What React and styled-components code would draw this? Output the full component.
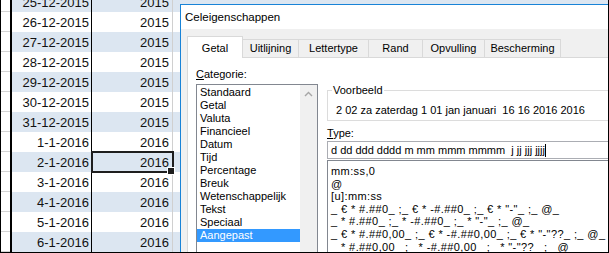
import styled, { createGlobalStyle } from "styled-components";

const GlobalStyle = createGlobalStyle`
  html, body { margin: 0; padding: 0; background: #fff; }
  body { font-family: "Liberation Sans", Arial, sans-serif; }
  * { box-sizing: border-box; }
`;

const rows = [
  ["25-12-2015", "2015"],
  ["26-12-2015", "2015"],
  ["27-12-2015", "2015"],
  ["28-12-2015", "2015"],
  ["29-12-2015", "2015"],
  ["30-12-2015", "2015"],
  ["31-12-2015", "2015"],
  ["1-1-2016", "2016"],
  ["2-1-2016", "2016"],
  ["3-1-2016", "2016"],
  ["4-1-2016", "2016"],
  ["5-1-2016", "2016"],
  ["6-1-2016", "2016"],
];

const tabs = [
  { label: "Getal", w: 56 },
  { label: "Uitlijning", w: 57 },
  { label: "Lettertype", w: 71 },
  { label: "Rand", w: 55 },
  { label: "Opvulling", w: 63 },
  { label: "Bescherming", w: 77 },
];

const categories = [
  "Standaard",
  "Getal",
  "Valuta",
  "Financieel",
  "Datum",
  "Tijd",
  "Percentage",
  "Breuk",
  "Wetenschappelijk",
  "Tekst",
  "Speciaal",
  "Aangepast",
];

const formats = [
  "mm:ss,0",
  "@",
  "[u]:mm:ss",
  '_ € * #.##0_ ;_ € * -#.##0_ ;_ € * "-"_ ;_ @_',
  '_ * #.##0_ ;_ * -#.##0_ ;_ * "-"_ ;_ @_',
  '_ € * #.##0,00_ ;_ € * -#.##0,00_ ;_ € * "-"??_ ;_ @_',
  '_ * #.##0,00_ ;_ * -#.##0,00_ ;_ * "-"??_ ;_ @_',
];

export default function App() {
  return (
    <>
      <GlobalStyle />
      <Frame>
        <Sheet>
          {rows.map(([date, year], i) => (
            <Row key={date} $band={i % 2 === 0}>
              <Stub />
              <DateCell>{date}</DateCell>
              <YearCell $selected={date === "2-1-2016"}>{year}</YearCell>
              <Filler />
            </Row>
          ))}
        </Sheet>

        <Dialog>
          <TitleBar>Celeigenschappen</TitleBar>
          <Body>
            <TabStrip>
              {tabs.map((t, i) => (
                <Tab key={t.label} $w={t.w} $active={i === 0}>
                  {t.label}
                </Tab>
              ))}
            </TabStrip>
            <TabPage>
              <LeftCol>
                <Label>
                  <u>C</u>ategorie:
                </Label>
                <ListBox>
                  <Items>
                    {categories.map((c) => (
                      <Item key={c} $selected={c === "Aangepast"}>
                        {c}
                      </Item>
                    ))}
                  </Items>
                  <ScrollBar>
                    <ScrollButton>
                      <svg width="9" height="6" viewBox="0 0 9 6">
                        <path d="M1 5 L4.5 1.5 L8 5" fill="none" stroke="#a6a6a6" strokeWidth="1.4" />
                      </svg>
                    </ScrollButton>
                  </ScrollBar>
                </ListBox>
              </LeftCol>

              <RightCol>
                <Group>
                  <Legend>Voorbeeld</Legend>
                  <Sample>2 02 za zaterdag 1 01 jan januari  16 16 2016 2016</Sample>
                </Group>
                <TypeLabel>
                  <u>T</u>ype:
                </TypeLabel>
                <TypeInput>
                  d dd ddd dddd m mm mmm mmmm  j jj jjj jjjj
                  <Caret />
                </TypeInput>
                <FormatList>
                  {formats.map((f) => (
                    <FormatItem key={f}>{f}</FormatItem>
                  ))}
                </FormatList>
              </RightCol>
            </TabPage>
          </Body>
        </Dialog>
      </Frame>
    </>
  );
}

const Frame = styled.div`
  position: relative;
  width: 609px;
  height: 253px;
  overflow: hidden;
  border-left: 1px solid #000;
  border-right: 1px solid #000;
  border-bottom: 1px solid #000;
  background: #fff;
`;

const Sheet = styled.div`
  margin-top: -8px;
  display: flex;
  flex-direction: column;
`;

const Row = styled.div`
  display: grid;
  grid-template-columns: 9px 82px 81px 1fr;
  height: 20px;
  background: ${(p) => (p.$band ? "#dce6f1" : "#ffffff")};
  font-size: 13px;
  color: #111;
`;

const Stub = styled.div`
  background: #fff;
  border-bottom: 1px solid #d4d4d4;
`;

const DateCell = styled.div`
  border-left: 2px solid #000;
  border-right: 1px solid #000;
  text-align: right;
  padding: 2px 2px 0 0;
  line-height: 18px;
`;

const YearCell = styled.div`
  position: relative;
  border-right: 1px solid #d0d0d0;
  text-align: right;
  padding: 2px 3px 0 0;
  line-height: 18px;
  ${(p) =>
    p.$selected &&
    `
    z-index: 1;
    outline: 2px solid #1e1e1e;
    outline-offset: -1px;
    &::after {
      content: "";
      position: absolute;
      right: -3px;
      bottom: -3px;
      width: 6px;
      height: 6px;
      background: #1e1e1e;
      border: 1px solid #fff;
    }
  `}
`;

const Filler = styled.div``;

const Dialog = styled.div`
  position: absolute;
  left: 179px;
  top: 4px;
  width: 440px;
  height: 280px;
  border: 1px solid #1883d7;
  background: #f0f0f0;
  font-family: "Liberation Sans", Arial, sans-serif;
  font-size: 11px;
  color: #000;
  z-index: 2;
`;

const TitleBar = styled.div`
  height: 24px;
  line-height: 24px;
  padding-left: 4px;
  background: #fff;
  font-size: 11.5px;
`;

const Body = styled.div`
  padding: 7px 0 0 6px;
`;

const TabStrip = styled.div`
  display: flex;
  align-items: flex-end;
  height: 21px;
`;

const Tab = styled.div`
  width: ${(p) => p.$w}px;
  margin-left: -1px;
  &:first-child {
    margin-left: 0;
  }
  text-align: center;
  border: 1px solid #d9d9d9;
  white-space: nowrap;
  ${(p) =>
    p.$active
      ? `
    position: relative;
    z-index: 1;
    height: 22px;
    margin-bottom: -1px;
    border-bottom: none;
    background: #fff;
    padding-top: 4px;
    line-height: 14px;
  `
      : `
    height: 18px;
    border-bottom: none;
    background: #f0f0f0;
    line-height: 17px;
  `}
`;

const TabPage = styled.div`
  display: flex;
  height: 220px;
  background: #fff;
  border: 1px solid #d9d9d9;
`;

const LeftCol = styled.div`
  width: 122px;
  margin-left: 8px;
  padding-top: 9px;
  display: flex;
  flex-direction: column;
`;

const Label = styled.div`
  height: 14px;
  line-height: 14px;
  margin-bottom: 3px;
`;

const ListBox = styled.div`
  display: flex;
  height: 190px;
  border: 1px solid #828790;
`;

const Items = styled.div`
  flex: 1;
  padding-top: 1px;
`;

const Item = styled.div`
  height: 13px;
  line-height: 13px;
  padding-left: 3px;
  white-space: nowrap;
  background: ${(p) => (p.$selected ? "#3399ff" : "transparent")};
  color: ${(p) => (p.$selected ? "#fff" : "#000")};
`;

const ScrollBar = styled.div`
  width: 17px;
  background: #f0f0f0;
`;

const ScrollButton = styled.div`
  height: 17px;
  display: flex;
  align-items: center;
  justify-content: center;
`;

const RightCol = styled.div`
  flex: 1;
  margin-left: 9px;
  padding-top: 25px;
  display: flex;
  flex-direction: column;
`;

const Group = styled.fieldset`
  margin: 0;
  padding: 0;
  min-width: 0;
  border: 1px solid #dcdcdc;
`;

const Legend = styled.legend`
  margin-left: 4px;
  padding: 0 1px;
  line-height: 14px;
`;

const Sample = styled.div`
  padding: 6px 0 3px 8px;
  line-height: 14px;
  white-space: pre;
`;

const TypeLabel = styled.div`
  margin-top: 5px;
  height: 14px;
  line-height: 14px;
`;

const TypeInput = styled.div`
  margin-top: 1px;
  height: 18px;
  border: 1px solid #abadb3;
  padding-left: 3px;
  line-height: 16px;
  white-space: pre;
  display: flex;
  align-items: center;
`;

const Caret = styled.span`
  width: 1px;
  height: 13px;
  background: #000;
`;

const FormatList = styled.div`
  margin-top: 1px;
  border: 1px solid #828790;
  padding: 4px 0 0 3px;
  height: 120px;
`;

const FormatItem = styled.div`
  line-height: 12.6px;
  height: 12.6px;
  white-space: pre;
  letter-spacing: 0.4px;
`;
